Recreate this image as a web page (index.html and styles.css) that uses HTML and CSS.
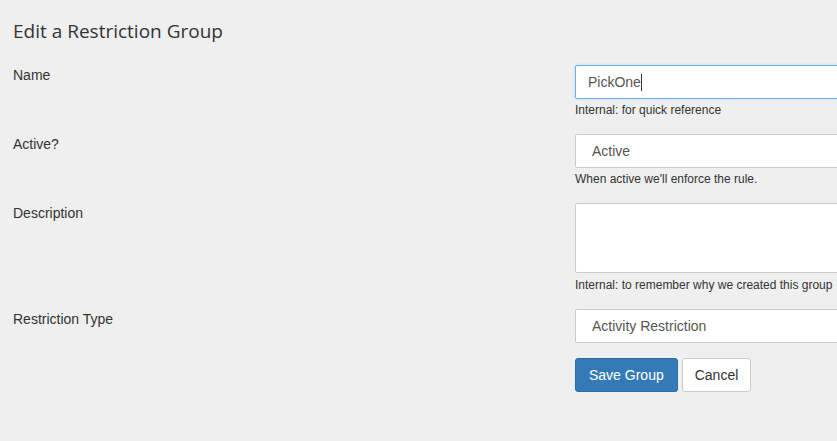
FILE: index.html
```html
<!DOCTYPE html>
<html lang="en">
<head>
<meta charset="utf-8">
<title>Edit a Restriction Group</title>
<link rel="stylesheet" href="styles.css">
</head>
<body>
<div class="page">
  <h1 class="title">Edit a Restriction Group</h1>
  <form class="form">
    <div class="row">
      <label class="label">Name</label>
      <div class="control">
        <div class="input-wrap">
          <input class="input focus" type="text" value="PickOne">
          <span class="caret"></span>
        </div>
        <div class="help">Internal: for quick reference</div>
      </div>
    </div>
    <div class="row">
      <label class="label">Active?</label>
      <div class="control">
        <select class="input select"><option>Active</option></select>
        <div class="help">When active we'll enforce the rule.</div>
      </div>
    </div>
    <div class="row">
      <label class="label">Description</label>
      <div class="control">
        <textarea class="input textarea"></textarea>
        <div class="help help-ta">Internal: to remember why we created this group</div>
      </div>
    </div>
    <div class="row row-last">
      <label class="label">Restriction Type</label>
      <div class="control">
        <select class="input select"><option>Activity Restriction</option></select>
      </div>
    </div>
    <div class="row">
      <div class="label"></div>
      <div class="control buttons">
        <button type="button" class="btn btn-primary">Save Group</button>
        <button type="button" class="btn btn-default">Cancel</button>
      </div>
    </div>
  </form>
</div>
</body>
</html>
```

FILE: styles.css
```css
html, body {
  margin: 0;
  padding: 0;
  background: #efefef;
  overflow: hidden;
}
body {
  font-family: "Liberation Sans", Arial, sans-serif;
  color: #333;
  font-size: 14px;
  width: 837px;
  height: 441px;
}
.page {
  padding: 20px 0 0 13px;
}
.title {
  margin: 0;
  font-family: "Open Sans", sans-serif;
  font-weight: 400;
  font-size: 19px;
  line-height: 22px;
  color: #333;
}
.form {
  margin-top: 23px;
}
.row {
  display: grid;
  grid-template-columns: 562px 290px;
  margin-bottom: 15px;
}
.row-last {
  margin-bottom: 15px;
}
.label {
  display: block;
  line-height: 20px;
  font-size: 14px;
  color: #333;
}
.control {
  display: flex;
  flex-direction: column;
}
.input-wrap {
  position: relative;
}
.input {
  display: block;
  box-sizing: border-box;
  width: 290px;
  height: 34px;
  margin: 0;
  padding: 0 12px;
  border: 1px solid #ccc;
  border-radius: 2px;
  background: #fff;
  font-family: "Liberation Sans", Arial, sans-serif;
  font-size: 14px;
  color: #555;
  outline: none;
  caret-color: transparent;
}
.focus {
  border-color: #66afe9;
  box-shadow: 0 0 3px rgba(102, 175, 233, 0.35);
}
.caret {
  position: absolute;
  left: 66px;
  top: 9px;
  width: 1px;
  height: 17px;
  background: #333;
}
.select {
  -webkit-appearance: none;
  appearance: none;
  padding-left: 16px;
}
.textarea {
  height: 70px;
  resize: none;
  padding: 6px 12px;
}
.help {
  margin-top: 3px;
  font-size: 12px;
  line-height: 17px;
  color: #333;
  white-space: nowrap;
}
.help-ta {
  margin-top: 4px;
}
.buttons {
  flex-direction: row;
  gap: 4px;
}
.btn {
  box-sizing: border-box;
  height: 34px;
  padding: 0 12px;
  font-family: "Liberation Sans", Arial, sans-serif;
  font-size: 14px;
  border: 1px solid #ccc;
  border-radius: 3px;
  cursor: pointer;
}
.btn-primary {
  background: #337ab7;
  border-color: #2e6da4;
  color: #fff;
  padding: 0 13px;
}
.btn-default {
  background: #fff;
  color: #333;
}
```
